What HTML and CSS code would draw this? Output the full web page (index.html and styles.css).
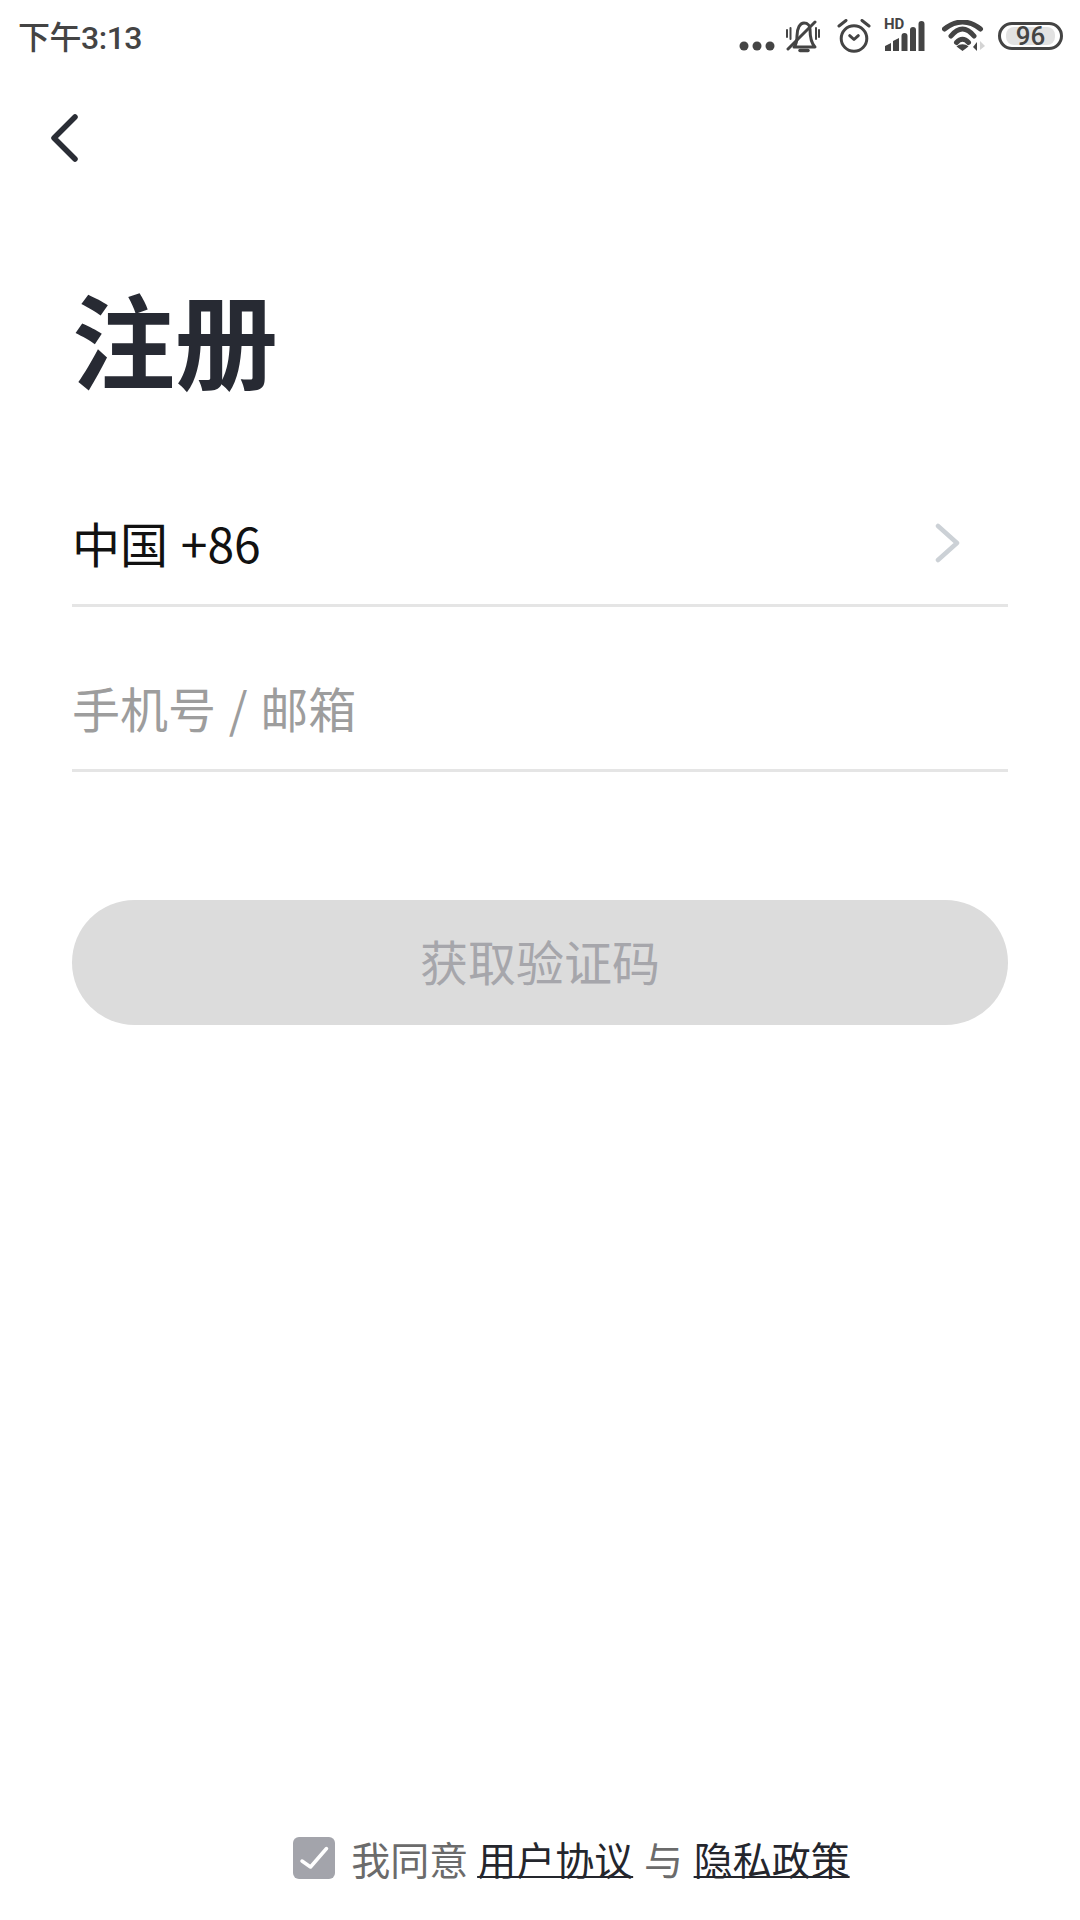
FILE: index.html
```html
<!DOCTYPE html>
<html lang="zh-CN">
<head>
    <meta charset="UTF-8">
    <meta name="viewport" content="width=device-width, initial-scale=1.0">
    <title>注册</title>
    <link rel="stylesheet" href="styles.css">
</head>
<body>
    <div class="page">
        <div class="status-bar">
            <span class="clock">下午3:13</span>
            <div class="status-icons">
                <svg class="icon-dots" width="36" height="10" viewBox="0 0 36 10"><circle cx="5" cy="5" r="4.500"/><circle cx="18" cy="5" r="4.500"/><circle cx="31" cy="5" r="4.500"/></svg>
                <svg class="icon-line icon-bell" width="34" height="33" viewBox="0 0 34 33"><path d="M8 27c3-3 3-7 3-11 0-8 3-13 7-13s6 3 6 6c0 6 1 14 5 18z"/><path d="M2 29L29 2"/><path class="bell-foot" d="M14 30.500h8"/><path class="bell-wave" d="M1 10v7M4.500 8v11M30 8v11M33 10v7"/></svg>
                <svg class="icon-line icon-alarm" width="34" height="34" viewBox="0 0 34 34"><circle cx="17" cy="19.500" r="12.800"/><path d="M12.700 16.700l4.300 3.800 4.300-3.800"/><path d="M2 7l7-5.500M32 7l-7-5.500"/></svg>
                <div class="icon-signal">
                    <span class="hd">HD</span>
                    <svg width="40" height="30" viewBox="0 0 40 30"><path d="M0 25l6-3v8H0zM8 20l6-3v13H8zM16.500 15a3 3 0 0 1 6 0v15h-6zM25 9a3 3 0 0 1 6 0v21h-6zM33.500 3a3 3 0 0 1 6 0v27h-6z"/></svg>
                </div>
                <svg class="icon-wifi" width="44" height="32" viewBox="0 0 44 32"><path d="M2.500 9Q20.500-5 38.500 9M9 16Q20.500 2 32 16M14.500 22.500Q20.500 16 26.500 22.500"/><path class="wifi-dot" d="M20.500 31l-6-4.500c3-3 9-3 12 0z"/><path class="wifi-down" d="M35 31v-9l-4 5z"/><path class="wifi-up" d="M38 21v9l5-4z"/></svg>
                <div class="battery"><span class="battery-level">96</span></div>
            </div>
        </div>

        <div class="nav-bar">
            <svg width="40" height="56" viewBox="0 0 40 56"><path d="M29 6L8 27l21 21" fill="none" stroke="#2a2d35" stroke-width="5.500" stroke-linecap="round" stroke-linejoin="round"/></svg>
        </div>

        <h1 class="title">注册</h1>

        <div class="field field-country">
            <span class="field-value">中国 +86</span>
            <svg width="26" height="42" viewBox="0 0 26 42"><path d="M4 5l19 17L4 39" fill="none" stroke="#ccd1d6" stroke-width="4.500" stroke-linecap="round" stroke-linejoin="round"/></svg>
        </div>
        <div class="field field-phone">
            <span class="field-placeholder">手机号 / 邮箱</span>
        </div>

        <div class="submit">获取验证码</div>

        <div class="agreement">
            <span class="checkbox">
                <svg width="42" height="42" viewBox="0 0 42 42"><path d="M9 24l8.500 6L33.500 11.500" fill="none" stroke="#fff" stroke-width="3.500" stroke-linecap="round" stroke-linejoin="round"/></svg>
            </span>
            <span class="agree-text"><span class="agree-prefix">我同意</span> <a class="agree-link">用户协议</a> 与 <a class="agree-link">隐私政策</a></span>
        </div>
    </div>
</body>
</html>
```

FILE: styles.css
```css
body {
    margin: 0;
    background-color: #fff;
    font-family: "Noto Sans CJK SC", "Noto Sans", sans-serif;
}

.page {
    width: 1080px;
    height: 1920px;
    display: flex;
    flex-direction: column;
    box-sizing: border-box;
    padding: 0 72px;
}

/* status bar */
.status-bar {
    display: flex;
    align-items: center;
    justify-content: space-between;
    height: 72px;
    margin: 0 -72px;
    padding: 0 17px 0 18px;
}

.clock {
    margin-top: -3px;
    font-family: "Roboto", "Noto Sans CJK SC", sans-serif;
    font-size: 32px;
    font-weight: 500;
    letter-spacing: -0.5px;
    color: #444;
}

.status-icons {
    display: flex;
    align-items: center;
}

.status-icons svg {
    display: block;
    fill: #444;
}

.icon-dots {
    margin-top: 20px;
}

.icon-line {
    fill: none !important;
    stroke: #444;
    stroke-width: 3;
    stroke-linecap: round;
    stroke-linejoin: round;
}

.icon-bell {
    margin-left: 11px;
}

.bell-foot {
    stroke-width: 3.500;
}

.bell-wave {
    stroke-width: 2;
}

.icon-alarm {
    margin-left: 17px;
}

.icon-signal {
    position: relative;
    width: 40px;
    height: 30px;
    margin-left: 14px;
    display: flex;
    align-items: flex-end;
}

.hd {
    position: absolute;
    left: -1px;
    top: -7px;
    font-family: "Roboto", sans-serif;
    font-size: 15px;
    line-height: 20px;
    font-weight: 700;
    color: #444;
}

.icon-wifi {
    margin-left: 17px;
}

.icon-wifi path {
    fill: none;
    stroke: #444;
    stroke-width: 5;
    stroke-linecap: round;
}

.icon-wifi .wifi-dot,
.icon-wifi .wifi-down {
    fill: #444;
    stroke: none;
}

.icon-wifi .wifi-up {
    fill: #d4d4d4;
    stroke: none;
}

.battery {
    width: 65px;
    height: 28px;
    margin-left: 12px;
    box-sizing: border-box;
    border: 3px solid #444;
    border-radius: 14px;
    padding: 2px 5px;
    display: flex;
}

.battery-level {
    flex: 1;
    background-color: #e2e2e2;
    border-radius: 8px;
    font-family: "Roboto", sans-serif;
    font-size: 26px;
    font-weight: 500;
    line-height: 18px;
    text-align: center;
    color: #444;
}

/* header */
.nav-bar {
    height: 64px;
    margin: 39px 0 0 -26px;
}

.nav-bar svg {
    display: block;
}

.title {
    margin: 98px 0 0;
    font-size: 103px;
    line-height: 130px;
    font-weight: 700;
    color: #272a33;
}

/* form */
.field {
    display: flex;
    align-items: center;
    justify-content: space-between;
    height: 124px;
    border-bottom: 3px solid #e5e5e5;
    font-size: 48px;
    word-spacing: 2px;
}

.field-country {
    margin-top: 77px;
    padding-right: 48px;
}

.field-phone {
    margin-top: 38px;
}

.field-value {
    color: #111;
}

.field-placeholder {
    color: #9d9d9d;
}

.submit {
    margin-top: 128px;
    height: 125px;
    border-radius: 63px;
    background-color: #dcdcdc;
    color: #a6a6ab;
    font-size: 48px;
    line-height: 121px;
    text-align: center;
}

/* agreement */
.agreement {
    margin-top: auto;
    margin-bottom: 34px;
    display: flex;
    align-items: center;
    justify-content: center;
    gap: 16px;
    padding-left: 63px;
}

.checkbox {
    width: 42px;
    height: 42px;
    border-radius: 6px;
    background-color: #a3a4ab;
}

.checkbox svg {
    display: block;
}

.agree-text {
    font-size: 39px;
    word-spacing: 2px;
    color: #6b6b6b;
}

.agree-prefix {
    margin-right: -2px;
}

.agree-link {
    color: #24262d;
    text-decoration: underline;
    text-decoration-thickness: 2px;
}
```
